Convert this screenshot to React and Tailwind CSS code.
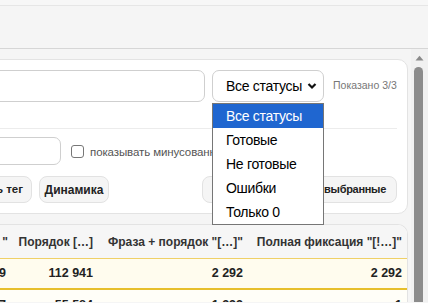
import React from "react";

export default function App() {
  return (
    <div className="relative w-[428px] h-[303px] overflow-hidden bg-[#f5f5f5] font-['Liberation_Sans',Arial,sans-serif] text-[#222]">
      <div className="h-[6px] border-b border-[#e6e6e6] bg-[#f7f7f7]" />
      <div className="h-[43px] border-b border-[#d6d6d6] bg-[#f5f5f5]" />
      <div className="flex h-[253px]">
        <div className="flex-1 overflow-hidden pt-[10px] pr-[3px]">
          {/* filter card */}
          <div className="ml-[-30px] rounded-[10px] border border-[#e3e3e3] bg-white pl-[12px] pr-[10px] pt-[10px] pb-[10px]">
            <div className="flex items-center">
              <div className="h-[32px] w-[222px] shrink-0 rounded-[7px] border border-[#cfcfcf] bg-white" />
              <div className="ml-[7px] flex h-[32px] w-[112px] shrink-0 items-center justify-between rounded-[7px] border border-[#cfcfcf] bg-white pl-[13px] pr-[6px] text-[14px] text-black whitespace-nowrap">
                <span className="tracking-[-0.3px]">Все статусы</span>
                <svg width="10" height="8" viewBox="0 0 10 8"><path d="M1.5 2 L5 5.5 L8.5 2" fill="none" stroke="#111" strokeWidth="2.2" /></svg>
              </div>
              <span className="ml-[9px] whitespace-nowrap text-[10.5px] text-[#777]">Показано 3/3</span>
            </div>
            <div className="mt-[26px] border-t border-[#ececec]" />
            <div className="mt-[8px] flex items-center">
              <div className="h-[28px] w-[78px] shrink-0 rounded-[7px] border border-[#cfcfcf] bg-white" />
              <div className="ml-[10px] h-[13px] w-[13px] shrink-0 rounded-[3px] border border-[#777] bg-white" />
              <span className="ml-[6px] mt-[3px] whitespace-nowrap text-[11.5px] tracking-[-0.1px] text-[#555]">показывать минусованные фразы</span>
            </div>
            <div className="mt-[11px] flex items-center">
              <div className="flex h-[27px] w-[49px] shrink-0 items-center justify-end overflow-hidden rounded-[8px] border border-[#e2e2e2] bg-[#f5f5f5] pr-[8px] text-[11.5px] font-bold text-[#222] whitespace-nowrap">Добавить тег</div>
              <div className="ml-[7px] flex h-[27px] w-[70px] shrink-0 items-center justify-center rounded-[8px] border border-[#e2e2e2] bg-[#f5f5f5] text-[12px] font-bold text-[#222]">Динамика</div>
              <div className="ml-auto flex h-[27px] w-[195px] shrink-0 items-center justify-end overflow-hidden rounded-[8px] border border-[#e2e2e2] bg-[#f5f5f5] pr-[10px] text-[11px] font-bold tracking-[-0.3px] text-[#222] whitespace-nowrap">Тег К выбранные</div>
            </div>
          </div>
          {/* table card */}
          <div className="ml-[-30px] mt-[10px] overflow-hidden rounded-t-[10px] border border-b-0 border-[#e3e3e3] bg-white">
            <div className="flex h-[34px] items-center border-b border-[#efd067] bg-[#f6f6f6] text-[12px] font-bold text-[#333] whitespace-nowrap">
              <div className="w-[37px] shrink-0 text-right">"</div>
              <div className="w-[85px] shrink-0 text-right">Порядок […]</div>
              <div className="w-[150px] shrink-0 text-right">Фраза + порядок "[…]"</div>
              <div className="w-[159px] shrink-0 text-right">Полная фиксация "[!…]"</div>
            </div>
            <div className="flex h-[31px] items-center border-b-2 border-[#e7bf2b] bg-[#fffcee] text-[12.5px] font-bold text-[#222]">
              <div className="w-[35px] shrink-0 text-right">9</div>
              <div className="w-[87px] shrink-0 text-right">112 941</div>
              <div className="w-[150px] shrink-0 text-right">2 292</div>
              <div className="w-[159px] shrink-0 text-right">2 292</div>
            </div>
            <div className="flex h-[31px] items-start bg-[#fffef8] pt-[6px] text-[12.5px] font-bold text-[#222]">
              <div className="w-[35px] shrink-0 text-right">7</div>
              <div className="w-[87px] shrink-0 text-right">55 584</div>
              <div className="w-[150px] shrink-0 text-right">1 232</div>
              <div className="w-[159px] shrink-0 text-right">1</div>
            </div>
          </div>
        </div>
        {/* scrollbar */}
        <div className="flex w-[17px] shrink-0 flex-col items-center bg-[#f1f1f1]">
          <svg className="mt-[6px]" width="9" height="6" viewBox="0 0 9 6"><path d="M0.5 5.5 L4.5 0.8 L8.5 5.5 Z" fill="#8a8a8a" /></svg>
          <div className="mt-[6px] ml-[-3px] w-[9px] flex-1 rounded-t-[5px] bg-[#8c8c8c]" />
        </div>
      </div>
      {/* dropdown popup */}
      <div className="absolute left-[212px] top-[103px] w-[112px] border border-[#767676] bg-white text-[14px] tracking-[-0.3px] text-black">
        <div className="flex h-[24px] items-center bg-[#1f66d0] pl-[13px] text-white">Все статусы</div>
        <div className="flex h-[24px] items-center pl-[13px]">Готовые</div>
        <div className="flex h-[24px] items-center pl-[13px]">Не готовые</div>
        <div className="flex h-[24px] items-center pl-[13px]">Ошибки</div>
        <div className="flex h-[24px] items-center pl-[13px]">Только 0</div>
      </div>
    </div>
  );
}
